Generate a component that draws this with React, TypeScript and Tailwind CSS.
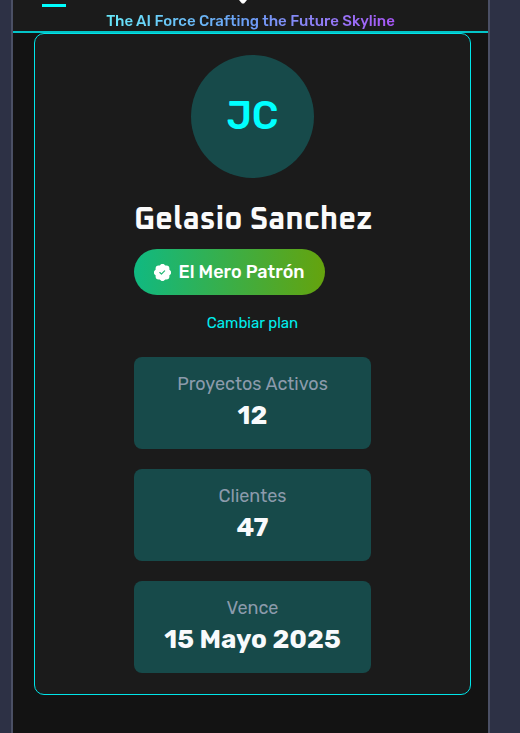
import { BsPatchCheckFill } from "react-icons/bs";

const stats = [
  { label: "Proyectos Activos", value: "12" },
  { label: "Clientes", value: "47" },
  { label: "Vence", value: "15 Mayo 2025" },
];

function Header() {
  return (
    <header className="flex h-[33px] flex-col border-b-2 border-[#04c4c8] bg-[#1b1b1b]">
      <div className="grid h-3 shrink-0 grid-cols-[1fr_auto_1fr] items-start overflow-hidden px-7">
        <button type="button" aria-label="Menú" className="flex h-[7px] w-6 items-end">
          <span className="ml-px h-[3px] w-6 shrink-0 bg-[#00ffff]" />
        </button>
        <svg viewBox="0 0 10 4" className="mr-4 h-1 w-2.5" aria-hidden="true">
          <path d="M1 0H9L6 3.5H4Z" fill="#ffffff" />
        </svg>
      </div>
      <p className="mx-auto bg-linear-to-r from-[#67e8f9] via-[#6b9cf5] to-[#a855f7] bg-clip-text text-[15px] leading-[18px] font-medium whitespace-nowrap text-transparent">
        The AI Force Crafting the Future Skyline
      </p>
    </header>
  );
}

export default function App() {
  return (
    <div className="min-h-screen bg-[#2d3145] pr-[30px] pl-[11px] font-['Rubik','Roboto',sans-serif]">
      <div className="min-h-screen border-x-2 border-[#4b5065] bg-[#131313]">
        <Header />
        <main className="pr-[17px] pb-9 pl-[21px]">
          <section className="flex flex-col items-center rounded-[10px] border border-[#00e5e9] bg-[#1b1b1b] px-5 py-[21px]">
            <div className="flex h-[123px] w-[123px] items-center justify-center rounded-full bg-[#174a4a] text-[39px] leading-none font-medium text-[#00ffff]">
              JC
            </div>
            <div className="mt-[23px] flex w-[237px] max-w-full flex-col">
              <h1 className="text-center font-['Oxanium','Rubik','Roboto',sans-serif] text-[31px] leading-10 font-bold whitespace-nowrap text-[#fafafa]">
                Gelasio Sanchez
              </h1>
              <div className="mt-2 flex h-[46px] w-[191px] items-center justify-center gap-[7px] rounded-full bg-linear-to-r/srgb from-[#10b981] to-[#65a30d] text-[18px] font-medium whitespace-nowrap text-white">
                <BsPatchCheckFill className="h-[17px] w-[17px] shrink-0" aria-hidden="true" />
                El Mero Patrón
              </div>
              <a href="#plan" className="mt-4 self-center text-[15px] leading-6 text-[#00eeee]">
                Cambiar plan
              </a>
              <dl className="mt-[22px] flex flex-col gap-5">
                {stats.map((s) => (
                  <div
                    key={s.label}
                    className="flex h-[92px] flex-col items-center rounded-lg bg-[#174a4a] pt-[13px]"
                  >
                    <dt className="text-[18px] leading-7 text-[#8c9bac]">{s.label}</dt>
                    <dd className="text-[26px] leading-9 font-bold whitespace-nowrap text-[#f8fafc]">
                      {s.value}
                    </dd>
                  </div>
                ))}
              </dl>
            </div>
          </section>
        </main>
      </div>
    </div>
  );
}
